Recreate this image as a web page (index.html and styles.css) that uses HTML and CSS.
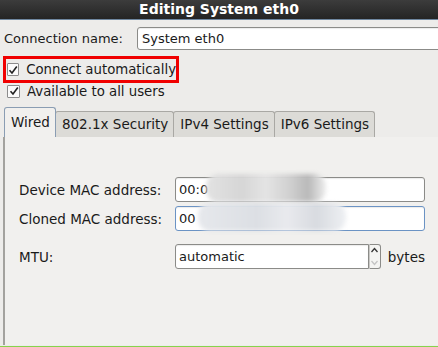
FILE: index.html
```html
<!DOCTYPE html>
<html>
<head>
    <title>Editing System eth0</title>
    <link rel="stylesheet" href="styles.css">
</head>
<body>
    <div class="titlebar">Editing System eth0</div>

    <div class="dialog">
        <div class="name-row">
            <label for="connName">Connection name:</label>
            <input type="text" id="connName" class="field name-field" value="System eth0">
        </div>

        <div class="check-row highlight">
            <span class="check"><svg width="10" height="10" viewBox="0 0 10 10"><path d="M1.5 5.2 L4 8 L8.8 1.5" fill="none" stroke="#222" stroke-width="1.6"/></svg></span>
            <span>Connect automatically</span>
        </div>
        <div class="check-row">
            <span class="check"><svg width="10" height="10" viewBox="0 0 10 10"><path d="M1.5 5.2 L4 8 L8.8 1.5" fill="none" stroke="#222" stroke-width="1.6"/></svg></span>
            <span>Available to all users</span>
        </div>

        <div class="tabs">
            <div class="tab active">Wired</div>
            <div class="tab">802.1x Security</div>
            <div class="tab">IPv4 Settings</div>
            <div class="tab">IPv6 Settings</div>
        </div>

        <div class="panel">
            <div class="form">
                <label>Device MAC address:</label>
                <div class="field mac">00:0<span class="smudge smudge-a"></span></div>

                <label>Cloned MAC address:</label>
                <div class="field mac focused">00<span class="smudge smudge-b"></span></div>

                <label class="mtu-label">MTU:</label>
                <div class="mtu">
                    <div class="field mtu-field">automatic</div>
                    <div class="spin">
                        <svg width="11" height="11" viewBox="0 0 11 11"><path d="M2.5 7 L5.5 3.5 L8.5 7" fill="none" stroke="#333" stroke-width="1.3"/></svg>
                        <svg width="11" height="11" viewBox="0 0 11 11"><path d="M2.5 4 L5.5 7.5 L8.5 4" fill="none" stroke="#c4c4c4" stroke-width="1.3"/></svg>
                    </div>
                    <span class="unit">bytes</span>
                </div>
            </div>
        </div>
    </div>
</body>
</html>
```

FILE: styles.css
```css
/* Window chrome */
body {
    margin: 0;
    background-color: #edecea;
    font-family: 'DejaVu Sans', sans-serif;
    font-size: 13px;
    color: #1a1a1a;
    overflow: hidden;
    height: 347px;
    border-bottom: 1px solid #86d34b;
    box-sizing: border-box;
}

.titlebar {
    height: 19px;
    line-height: 19px;
    background: linear-gradient(#3c3c3c, #242424);
    border-bottom: 1px solid #6f87a0;
    color: #ffffff;
    font-weight: bold;
    font-size: 14px;
    text-align: center;
}

.dialog {
    padding: 7px 0 0 3px;
}

/* Connection name */
.name-row {
    display: flex;
    align-items: center;
    gap: 14px;
    padding-left: 1px;
}

.field {
    background-color: #ffffff;
    border: 1px solid #8b8b88;
    border-radius: 3px;
    font-family: inherit;
    font-size: 13px;
    color: #1a1a1a;
    padding: 0 3px;
    height: 23px;
    line-height: 23px;
    box-sizing: border-box;
    box-shadow: inset 0 1px 1px rgba(0, 0, 0, 0.08);
}

.name-field {
    flex: 1;
    margin-right: -20px;
    padding: 0 4px;
}

/* Check boxes */
.check-row {
    display: flex;
    align-items: center;
    gap: 7px;
    height: 16px;
    padding-left: 4px;
    font-size: 13.3px;
    white-space: nowrap;
}

.highlight {
    width: 176px;
    box-sizing: border-box;
    margin-top: 6px;
    border: 3px solid #f00000;
    padding-left: 1px;
    height: 27px;
}

.check {
    width: 11px;
    height: 11px;
    border: 1px solid #8c8c8c;
    background-color: #fbfbfb;
    border-radius: 1px;
    display: flex;
    align-items: center;
    justify-content: center;
}

/* Tabs */
.tabs {
    display: flex;
    align-items: flex-end;
    margin-top: 9px;
    padding-left: 1px;
    height: 29px;
}

.tab {
    background-color: #dcdbd7;
    border: 1px solid #a9a8a4;
    border-bottom: none;
    border-radius: 3px 3px 0 0;
    padding: 0 5px 0 6px;
    height: 25px;
    line-height: 25px;
    margin-left: -1px;
    font-size: 13.5px;
}

.tab.active {
    background-color: #f1f0ee;
    border-color: #8a9db3;
    height: 29px;
    line-height: 29px;
    margin-left: 0;
    position: relative;
    z-index: 1;
}

/* Notebook page */
.panel {
    background-color: #f1f0ee;
    border-left: 2px solid #a3a29e;
    height: 208px;
    padding: 40px 0 0 14px;
    box-sizing: border-box;
}

.form {
    display: grid;
    grid-template-columns: 156px 250px;
    row-gap: 4px;
    align-items: center;
}

.form label {
    font-size: 13.5px;
}

.form .mtu-label {
    margin-top: 9px;
}

.mac {
    height: 25px;
    line-height: 24px;
    position: relative;
}

.focused {
    border-color: #6b93c4;
}

.smudge {
    position: absolute;
    top: -4px;
    height: 28px;
    border-radius: 12px;
    filter: blur(2px);
}

.smudge-a {
    left: 30px;
    width: 120px;
    background: linear-gradient(90deg, #e2e2e2, #d6d6d6 30%, #e4e4e4 50%, #d0d0d0 70%, #b9b9b9 85%, #eeeeee);
}

.smudge-b {
    left: 22px;
    width: 148px;
    background: linear-gradient(90deg, #e6e8ec, #dcdfe4 40%, #e9eaee 60%, #d8dbe0 80%, #eef0f3);
}

.mtu {
    display: flex;
    align-items: center;
    margin-top: 9px;
}

.mtu-field {
    width: 197px;
    height: 25px;
    line-height: 24px;
    border-radius: 3px 0 0 3px;
}

.spin {
    width: 12px;
    height: 25px;
    border: 1px solid #8b8b88;
    border-left: 1px solid #c9c8c5;
    border-radius: 0 3px 3px 0;
    background-color: #f4f4f2;
    box-sizing: border-box;
    display: flex;
    flex-direction: column;
    align-items: center;
    justify-content: space-around;
}

.unit {
    margin-left: 7px;
    font-size: 13.5px;
}
```
